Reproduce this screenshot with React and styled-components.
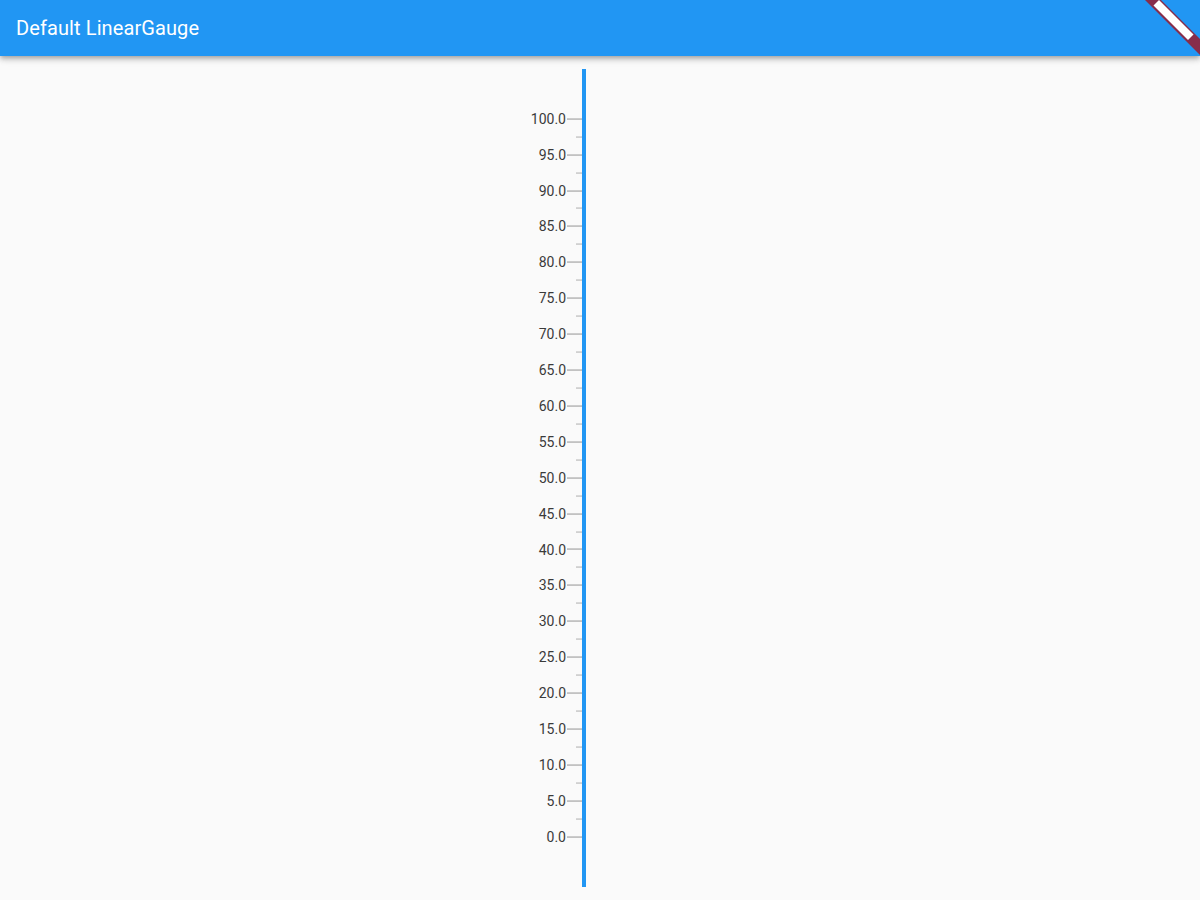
import React from 'react'
import styled, { createGlobalStyle } from 'styled-components'

const GlobalStyle = createGlobalStyle`
  html, body {
    margin: 0;
    padding: 0;
    background: #fafafa;
    font-family: Roboto, "Noto Sans", sans-serif;
  }
`

const Page = styled.div`
  width: 1200px;
  height: 900px;
  display: flex;
  flex-direction: column;
  background: #fafafa;
  overflow: hidden;
  position: relative;
`

const AppBar = styled.header`
  height: 56px;
  flex: none;
  display: flex;
  align-items: center;
  padding: 0 16px;
  background: #2196f3;
  box-shadow: 0 2px 4px -1px rgba(0, 0, 0, 0.2), 0 4px 5px 0 rgba(0, 0, 0, 0.14),
    0 1px 10px 0 rgba(0, 0, 0, 0.12);
  position: relative;
  z-index: 1;
`

const Title = styled.h1`
  margin: 0;
  color: #fff;
  font-size: 20px;
  font-weight: 400;
  letter-spacing: 0.1px;
`

// debug ribbon in the top right corner, over the app bar
const Ribbon = styled.svg`
  position: absolute;
  top: 0;
  right: 0;
  z-index: 2;
`

const Content = styled.main`
  flex: 1;
  display: flex;
  padding-left: 500px;
`

const GaugeSvg = styled.svg`
  display: block;
  font-family: Roboto, "Noto Sans", sans-serif;
`

const TOP = 13
const BAR_X = 82
const BAR_LEN = 818
const FIRST = 62.7 // y of the 100.0 tick inside the svg
const STEP = 35.9

const Gauge = () => {
  const majors = []
  for (let i = 0; i <= 20; i++) majors.push({ v: 100 - i * 5, y: FIRST + i * STEP })
  const minors = []
  for (let i = 0; i < 20; i++) minors.push(FIRST + (i + 0.5) * STEP)

  return (
    <GaugeSvg width="200" height="844" viewBox="0 0 200 844">
      <rect x={BAR_X} y={TOP} width="4" height={BAR_LEN} fill="#2196f3" />
      {majors.map(m => (
        <g key={m.v}>
          <rect x={BAR_X - 15} y={Math.round(m.y) - 0.5} width="15" height="1.1" fill="#9e9e9e" />
          <text
            x={BAR_X - 16}
            y={m.y + 5}
            textAnchor="end"
            fontSize="14"
            fontWeight="400"
            fill="#3a3a3a"
          >
            {m.v.toFixed(1)}
          </text>
        </g>
      ))}
      {minors.map(y => (
        <rect key={y} x={BAR_X - 6} y={Math.round(y) - 0.5} width="6" height="1.1" fill="#b5b5b5" />
      ))}
    </GaugeSvg>
  )
}

export default function App() {
  return (
    <>
      <GlobalStyle />
      <Page>
        <AppBar>
          <Title>Default LinearGauge</Title>
        </AppBar>
        <Ribbon width="60" height="56" viewBox="0 0 60 56">
          <polygon points="5,0 21,0 60,39 60,55" fill="#872d4b" />
          <polygon points="19,0 53.5,34.5 48,40 13.5,5.5" fill="#ffffff" />
        </Ribbon>
        <Content>
          <Gauge />
        </Content>
      </Page>
    </>
  )
}
